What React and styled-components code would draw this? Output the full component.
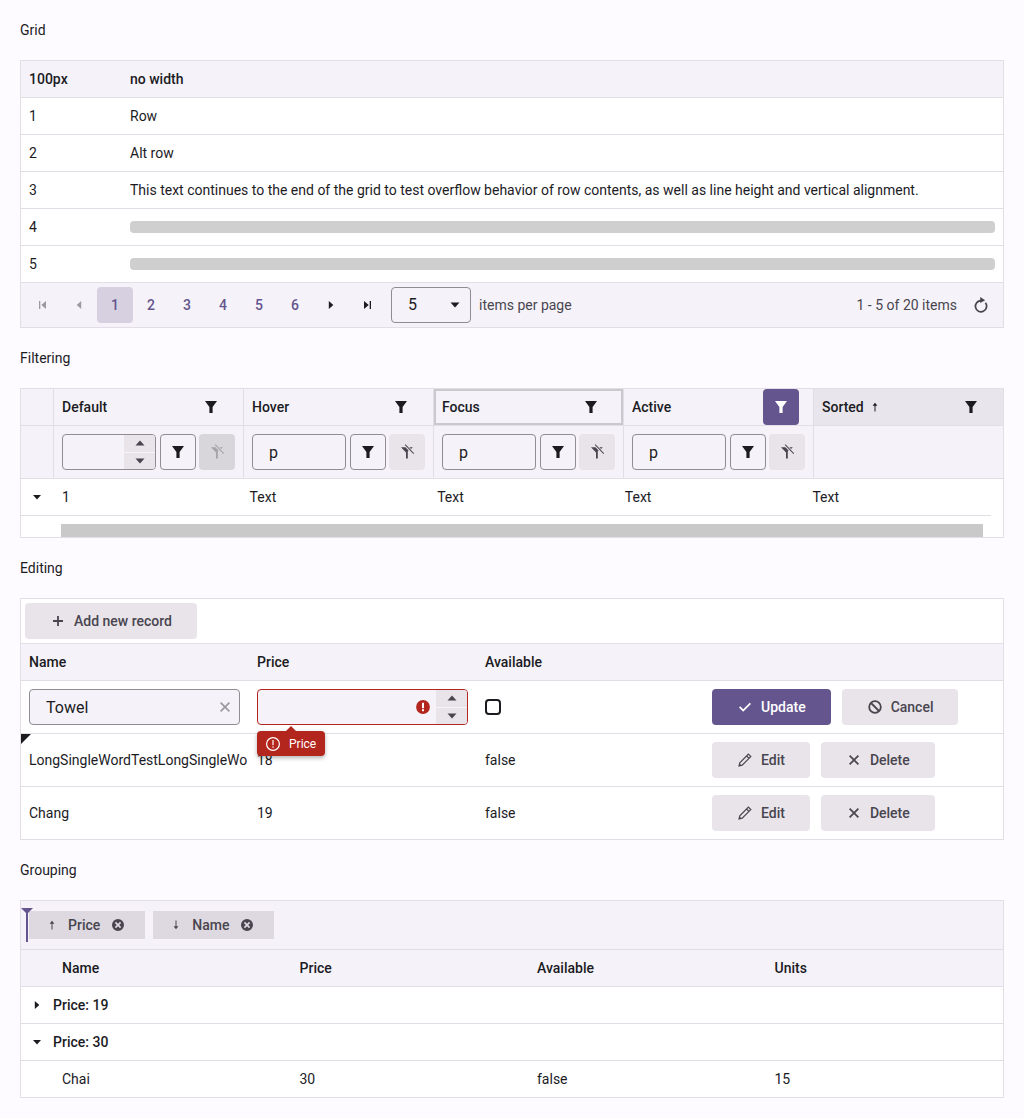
import React from "react";
import styled, { createGlobalStyle, css } from "styled-components";

const GlobalStyle = createGlobalStyle`
  html, body {
    margin: 0;
    padding: 0;
    background: #fdfbff;
    color: #1c1b1f;
    font-family: Roboto, "Liberation Sans", sans-serif;
    font-size: 14px;
    line-height: 20px;
  }
  * { box-sizing: border-box; }
`;

const PRIMARY = "#65558f";
const LINE = "#e1dfe5";
const HEAD = "#f5f3f9";
const TONAL = "#e8e4ea";
const MUTED = "#49454f";
const FIELD = "#8f8c94";

const Icon = ({ d, size = 16, color = "currentColor", children, ...rest }) => (
  <svg width={size} height={size} viewBox="0 0 16 16" fill={color} style={{ overflow: "visible", flex: "none" }} {...rest}>
    {d && <path d={d} />}
    {children}
  </svg>
);

const FUNNEL = "M2 2h12L9.6 8v6H6.4V8z";
const CARET_DOWN = "M3.5 5.5h9L8 10.5z";
const CARET_UP = "M3.5 10.5h9L8 5.5z";
const SMALL_DOWN = "M4 6h8L8 10.5z";
const SMALL_RIGHT = "M5.8 4v8L10.3 8z";
const SMALL_LEFT = "M10.2 4v8L5.7 8z";
const CROSS = "M4.2 3L8 6.8 11.8 3 13 4.2 9.2 8 13 11.8 11.8 13 8 9.2 4.2 13 3 11.8 6.8 8 3 4.2z";

const FilterClearIcon = () => (
  <Icon>
    <path d="M2 3.2h4.4l3.2 3.2-.8 1.1v6.9H7V8.4z" />
    <path d="M10.4 3.2h3.4l-1.7 1.9z" />
    <path d="M5.8 1l.7-.7 8.6 9-.7.7z" />
  </Icon>
);

const ArrowUp = () => <Icon d="M8 3.8l2.4 3H8.5v5.7h-1V6.8H5.6z" />;
const ArrowDown = () => <Icon d="M8 12.2l2.4-3H8.5V3.5h-1v5.7H5.6z" />;

const Page = styled.div`
  padding: 20px;
`;

const Heading = styled.div`
  height: 20px;
  margin-bottom: 20px;
`;

const Grid = styled.div`
  position: relative;
  border: 1px solid ${LINE};
  background: #fff;
  margin-bottom: 20px;
  &:last-child { margin-bottom: 0; }
`;

const Row = styled.div`
  display: grid;
  grid-template-columns: ${(p) => p.$cols};
  min-height: ${(p) => (p.$height || 36) + (p.$last ? 0 : 1)}px;
  border-bottom: 1px solid ${LINE};
  background: ${(p) => (p.$head ? HEAD : "#fff")};
  font-weight: ${(p) => (p.$head || p.$bold ? 500 : 400)};
  ${(p) => p.$last && css`border-bottom: none;`}
`;

const Cell = styled.div`
  display: flex;
  align-items: center;
  padding: 0 ${(p) => p.$pr ?? 8}px 0 8px;
  min-width: 0;
  white-space: nowrap;
  ${(p) => p.$divider && css`border-right: 1px solid ${LINE};`}
  ${(p) => p.$sorted && css`background: #e8e6ec;`}
  ${(p) => p.$focus && css`box-shadow: inset 0 0 0 2px #cbc9ce;`}
`;

const Skeleton = styled.div`
  width: 100%;
  height: 12px;
  border-radius: 4px;
  background: #cfcfcf;
`;

const Pager = styled.div`
  display: flex;
  align-items: center;
  height: 44px;
  padding: 0 4px;
  background: ${HEAD};
  color: ${MUTED};
`;

const PageButton = styled.div`
  width: 36px;
  height: 36px;
  display: flex;
  align-items: center;
  justify-content: center;
  border-radius: 4px;
  font-weight: 500;
  color: ${(p) => (p.$muted ? "#9c99a1" : p.$plain ? "#1c1b1f" : PRIMARY)};
  background: ${(p) => (p.$selected ? "#d6d0e0" : "transparent")};
`;

const PageSelect = styled.div`
  width: 80px;
  height: 36px;
  margin: 0 8px 0 6px;
  padding: 0 7px 0 16px;
  display: flex;
  align-items: center;
  justify-content: space-between;
  font-size: 16px;
  color: #1c1b1f;
  border: 1px solid ${FIELD};
  border-radius: 4px;
`;

const PagerInfo = styled.div`
  margin-left: auto;
  margin-right: 6px;
`;

const RefreshButton = styled.div`
  width: 36px;
  height: 36px;
  display: flex;
  align-items: center;
  justify-content: center;
  color: ${MUTED};
`;

const HeaderTitle = styled.span`
  flex: 1;
  display: flex;
  align-items: center;
  gap: 3px;
`;

const FilterMenuButton = styled.div`
  width: 36px;
  height: 36px;
  display: flex;
  align-items: center;
  justify-content: center;
  flex: none;
  border-radius: 4px;
  color: ${(p) => (p.$active ? "#fff" : "#1c1b1f")};
  background: ${(p) => (p.$active ? PRIMARY : "transparent")};
`;

const Input = styled.div`
  position: relative;
  flex: none;
  width: ${(p) => p.$width}px;
  height: 36px;
  display: flex;
  align-items: center;
  padding: 1px 0 0 16px;
  font-size: 16px;
  font-weight: 400;
  color: #1c1b1f;
  background: ${HEAD};
  border: 1px solid ${(p) => (p.$error ? "#b3261e" : FIELD)};
  border-radius: 4px;
  overflow: hidden;
`;

const Spinner = styled.div`
  position: absolute;
  top: 0;
  right: 0;
  bottom: 0;
  width: 31px;
  display: flex;
  flex-direction: column;
  justify-content: space-between;
`;

const SpinButton = styled.div`
  height: 16.5px;
  display: flex;
  align-items: center;
  justify-content: center;
  background: ${TONAL};
  color: ${MUTED};
`;

const ClearX = styled.span`
  position: absolute;
  right: 6px;
  top: 9px;
  display: flex;
  color: #9c99a1;
`;

const ErrorMark = styled.span`
  position: absolute;
  right: 36px;
  top: 9px;
  display: flex;
`;

const BoxButton = styled.div`
  width: 36px;
  height: 36px;
  flex: none;
  display: flex;
  align-items: center;
  justify-content: center;
  color: #1c1b1f;
  border: 1px solid ${FIELD};
  border-radius: 4px;
`;

const ClearButton = styled.div`
  width: 36px;
  height: 36px;
  flex: none;
  margin-left: -1px;
  display: flex;
  align-items: center;
  justify-content: center;
  border-radius: 4px;
  color: ${(p) => (p.$disabled ? "#a5a2a8" : MUTED)};
  background: ${(p) => (p.$disabled ? "#d9d6db" : TONAL)};
`;

const FilterRowCell = styled(Cell)`
  gap: 4px;
`;

const ScrollTrack = styled.div`
  height: 21px;
  padding: 8px 20px 0 40px;
`;

const ScrollThumb = styled.div`
  height: 13px;
  background: #c9c9c9;
`;

const Toolbar = styled.div`
  height: 45px;
  padding: 4px;
  border-bottom: 1px solid ${LINE};
`;

const Button = styled.div`
  display: inline-flex;
  align-items: center;
  gap: 8px;
  height: 36px;
  padding: 0 25px;
  border-radius: 4px;
  font-weight: 500;
  color: ${(p) => (p.$primary ? "#fff" : MUTED)};
  background: ${(p) => (p.$primary ? PRIMARY : TONAL)};
`;

const Commands = styled(Cell)`
  gap: 11px;
`;

const Checkbox = styled.div`
  width: 16px;
  height: 16px;
  border: 2px solid #1c1b1f;
  border-radius: 4px;
`;

const ErrorTip = styled.div`
  position: absolute;
  left: 236px;
  top: 132px;
  height: 25px;
  width: 68px;
  display: flex;
  align-items: center;
  gap: 8px;
  padding-left: 8px;
  font-size: 12px;
  color: #fff;
  background: #b3261e;
  border-radius: 4px;
  box-shadow: 0 2px 4px rgba(0, 0, 0, 0.3);
  &::before {
    content: "";
    position: absolute;
    left: 29px;
    top: -5px;
    border-left: 5px solid transparent;
    border-right: 5px solid transparent;
    border-bottom: 5px solid #b3261e;
  }
`;

const DirtyMark = styled.div`
  position: absolute;
  left: 0;
  top: 135px;
  border-top: 10px solid #1c1b1f;
  border-right: 10px solid transparent;
`;

const GroupPanel = styled.div`
  position: relative;
  display: flex;
  gap: 8px;
  height: 49px;
  padding: 10px 8px;
  background: ${HEAD};
  border-bottom: 1px solid ${LINE};
`;

const Chip = styled.div`
  display: flex;
  align-items: center;
  gap: 8px;
  height: 28px;
  padding: 0 19px 0 15px;
  font-weight: 500;
  color: ${MUTED};
  background: #ded9e1;
`;

const ChipClose = styled.span`
  display: flex;
  margin-left: 2px;
`;

const DropHint = styled.div`
  position: absolute;
  left: 5px;
  top: 7px;
  width: 2px;
  height: 34px;
  background: ${PRIMARY};
  &::before {
    content: "";
    position: absolute;
    left: -5px;
    top: 0;
    border-left: 6px solid transparent;
    border-right: 6px solid transparent;
    border-top: 6px solid ${PRIMARY};
  }
`;

const GroupCaret = styled.span`
  display: flex;
  margin-right: 8px;
`;

const FILTER_COLS = "33px repeat(4, 190px) 1fr";
const DATA_COLS = "33px repeat(5, 187.6px)";
const EDIT_COLS = "228px 228px 227px 1fr";
const GROUP_COLS = "33px repeat(4, 237.5px)";
const PLAIN_COLS = "101px 1fr";

const BasicGrid = () => (
  <Grid>
    <Row $head $cols={PLAIN_COLS}>
      <Cell>100px</Cell>
      <Cell>no width</Cell>
    </Row>
    <Row $cols={PLAIN_COLS}>
      <Cell>1</Cell>
      <Cell>Row</Cell>
    </Row>
    <Row $cols={PLAIN_COLS}>
      <Cell>2</Cell>
      <Cell>Alt row</Cell>
    </Row>
    <Row $cols={PLAIN_COLS}>
      <Cell>3</Cell>
      <Cell>This text continues to the end of the grid to test overflow behavior of row contents, as well as line height and vertical alignment.</Cell>
    </Row>
    <Row $cols={PLAIN_COLS}>
      <Cell>4</Cell>
      <Cell><Skeleton /></Cell>
    </Row>
    <Row $cols={PLAIN_COLS}>
      <Cell>5</Cell>
      <Cell><Skeleton /></Cell>
    </Row>
    <Pager>
      <PageButton $muted><Icon d="M4 4h1.3v8H4zM11 4v8L6.3 8z" /></PageButton>
      <PageButton $muted><Icon d={SMALL_LEFT} /></PageButton>
      <PageButton $selected>1</PageButton>
      {[2, 3, 4, 5, 6].map((n) => (
        <PageButton key={n}>{n}</PageButton>
      ))}
      <PageButton $plain><Icon d={SMALL_RIGHT} /></PageButton>
      <PageButton $plain><Icon d="M5 4v8l4.7-4zM10.7 4H12v8h-1.3z" /></PageButton>
      <PageSelect>5<Icon d={CARET_DOWN} /></PageSelect>
      <span>items per page</span>
      <PagerInfo>1 - 5 of 20 items</PagerInfo>
      <RefreshButton>
        <Icon>
          <path d="M8.2 3.6A5.6 5.6 0 1 0 12.5 5.8" fill="none" stroke="currentColor" strokeWidth="1.7" />
          <path d="M7.2 0l5 3.2-5 2.8z" />
        </Icon>
      </RefreshButton>
    </Pager>
  </Grid>
);

const FilterHeader = ({ title, focus, active, sorted, divider = true, arrow }) => (
  <Cell $pr={14} $divider={divider} $focus={focus} $sorted={sorted}>
    <HeaderTitle>{title}{arrow && <ArrowUp />}</HeaderTitle>
    <FilterMenuButton $active={active}><Icon d={FUNNEL} /></FilterMenuButton>
  </Cell>
);

const FilterInputCell = ({ numeric }) => (
  <FilterRowCell $divider>
    <Input $width={94}>
      {numeric ? (
        <Spinner>
          <SpinButton><Icon d={CARET_UP} /></SpinButton>
          <SpinButton><Icon d={CARET_DOWN} /></SpinButton>
        </Spinner>
      ) : "p"}
    </Input>
    <BoxButton><Icon d={FUNNEL} /></BoxButton>
    <ClearButton $disabled={numeric}><FilterClearIcon /></ClearButton>
  </FilterRowCell>
);

const DataRow = styled(Row).attrs({ $cols: DATA_COLS })`
  margin-right: 12px;
`;

const FilteringGrid = () => (
  <Grid>
    <Row $head $cols={FILTER_COLS}>
      <Cell $divider />
      <FilterHeader title="Default" />
      <FilterHeader title="Hover" />
      <FilterHeader title="Focus" focus />
      <FilterHeader title="Active" active />
      <FilterHeader title="Sorted" sorted divider={false} arrow />
    </Row>
    <Row $head $cols={FILTER_COLS} $height={52}>
      <Cell $divider />
      <FilterInputCell numeric />
      <FilterInputCell />
      <FilterInputCell />
      <FilterInputCell />
      <Cell />
    </Row>
    <DataRow>
      <Cell $pr={0}><Icon d={SMALL_DOWN} /></Cell>
      <Cell>1</Cell>
      <Cell>Text</Cell>
      <Cell>Text</Cell>
      <Cell>Text</Cell>
      <Cell>Text</Cell>
    </DataRow>
    <ScrollTrack><ScrollThumb /></ScrollTrack>
  </Grid>
);

const RecordRow = ({ name, price, last }) => (
  <Row $cols={EDIT_COLS} $height={52} $last={last}>
    <Cell>{name}</Cell>
    <Cell>{price}</Cell>
    <Cell>false</Cell>
    <Commands>
      <Button>
        <Icon>
          <path
            d="M11.4 2.2l2.4 2.4-8.6 8.6-3.2.8.8-3.2zM9.6 4l2.4 2.4"
            fill="none"
            stroke="currentColor"
            strokeWidth="1.2"
          />
          <path d="M2 14l.6-2.6 2 2z" />
        </Icon>
        Edit
      </Button>
      <Button>
        <Icon d={CROSS} />
        Delete
      </Button>
    </Commands>
  </Row>
);

const EditingGrid = () => (
  <Grid>
    <Toolbar>
      <Button>
        <Icon d="M7.1 3h1.8v4.1H13v1.8H8.9V13H7.1V8.9H3V7.1h4.1z" />
        Add new record
      </Button>
    </Toolbar>
    <Row $head $cols={EDIT_COLS}>
      <Cell>Name</Cell>
      <Cell>Price</Cell>
      <Cell>Available</Cell>
      <Cell />
    </Row>
    <Row $cols={EDIT_COLS} $height={52}>
      <Cell>
        <Input $width={211}>
          Towel
          <ClearX><Icon d={CROSS} /></ClearX>
        </Input>
      </Cell>
      <Cell>
        <Input $width={211} $error>
          <ErrorMark>
            <Icon color="#b3261e">
              <circle cx="8" cy="8" r="6.9" />
              <rect x="7" y="3.8" width="2" height="5.4" fill="#fff" />
              <rect x="7" y="10.2" width="2" height="2" fill="#fff" />
            </Icon>
          </ErrorMark>
          <Spinner>
            <SpinButton><Icon d={CARET_UP} /></SpinButton>
            <SpinButton><Icon d={CARET_DOWN} /></SpinButton>
          </Spinner>
        </Input>
      </Cell>
      <Cell><Checkbox /></Cell>
      <Commands>
        <Button $primary>
          <Icon d="M2 8.5l1.2-1.2 3 3 6.6-6.6L14 4.9l-7.8 7.8z" />
          Update
        </Button>
        <Button>
          <Icon>
            <circle cx="8" cy="8" r="5.8" fill="none" stroke="currentColor" strokeWidth="1.8" />
            <path d="M4 4l8 8" stroke="currentColor" strokeWidth="1.8" />
          </Icon>
          Cancel
        </Button>
      </Commands>
    </Row>
    <RecordRow name="LongSingleWordTestLongSingleWo" price="18" />
    <RecordRow name="Chang" price="19" last />
    <DirtyMark />
    <ErrorTip>
      <Icon>
        <circle cx="8" cy="8" r="6.4" fill="none" stroke="#fff" strokeWidth="1.2" />
        <rect x="7.4" y="4" width="1.2" height="5.2" fill="#fff" />
        <rect x="7.4" y="10.4" width="1.2" height="1.4" fill="#fff" />
      </Icon>
      Price
    </ErrorTip>
  </Grid>
);

const CloseCircle = () => (
  <ChipClose>
    <Icon>
      <path
        fillRule="evenodd"
        d="M8 2a6 6 0 1 1 0 12A6 6 0 0 1 8 2zM6 4.8L4.8 6 6.8 8l-2 2L6 11.2l2-2 2 2 1.2-1.2-2-2 2-2L10 4.8l-2 2z"
      />
    </Icon>
  </ChipClose>
);

const GroupingGrid = () => (
  <Grid>
    <GroupPanel>
      <DropHint />
      <Chip><ArrowUp />Price<CloseCircle /></Chip>
      <Chip><ArrowDown />Name<CloseCircle /></Chip>
    </GroupPanel>
    <Row $head $cols={GROUP_COLS}>
      <Cell />
      <Cell>Name</Cell>
      <Cell>Price</Cell>
      <Cell>Available</Cell>
      <Cell>Units</Cell>
    </Row>
    <Row $bold $cols="1fr">
      <Cell><GroupCaret><Icon d={SMALL_RIGHT} /></GroupCaret>Price: 19</Cell>
    </Row>
    <Row $bold $cols="1fr">
      <Cell><GroupCaret><Icon d={SMALL_DOWN} /></GroupCaret>Price: 30</Cell>
    </Row>
    <Row $last $cols={GROUP_COLS}>
      <Cell />
      <Cell>Chai</Cell>
      <Cell>30</Cell>
      <Cell>false</Cell>
      <Cell>15</Cell>
    </Row>
  </Grid>
);

export default function App() {
  return (
    <Page>
      <GlobalStyle />
      <Heading>Grid</Heading>
      <BasicGrid />
      <Heading>Filtering</Heading>
      <FilteringGrid />
      <Heading>Editing</Heading>
      <EditingGrid />
      <Heading>Grouping</Heading>
      <GroupingGrid />
    </Page>
  );
}
